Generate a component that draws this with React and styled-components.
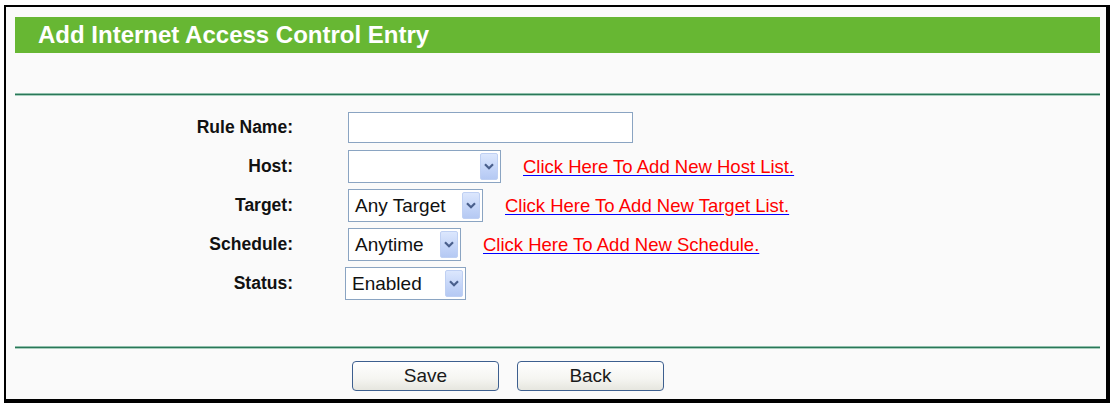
import React from "react";
import styled, { createGlobalStyle } from "styled-components";

const Global = createGlobalStyle`
  html, body { margin: 0; padding: 0; background: #ffffff; }
  body { font-family: "Liberation Sans", Arial, sans-serif; }
`;

const Frame = styled.div`
  margin: 5px 0 0 4px;
  width: 1106px;
  height: 398px;
  box-sizing: border-box;
  border-style: solid;
  border-color: #000;
  border-width: 2px 4px 4px 2px;
  background: #fafafa;
  padding: 10px 6px 0 9px;
  display: flex;
  flex-direction: column;
  overflow: hidden;
`;

const Header = styled.div`
  height: 36px;
  background: #67b733;
  color: #fff;
  font-weight: bold;
  font-size: 24px;
  display: flex;
  align-items: center;
  padding-left: 23px;
`;

const Divider = styled.div`
  height: 3px;
  margin-top: ${(p) => p.$top}px;
  background: linear-gradient(#a9cfbf 0, #8fbfab 0.5px, #2a7758 1px, #2a7758 2px, #a9cfbf 2.5px, #d9ebe3 3px);
`;

const Form = styled.div`
  margin-top: 12px;
  display: grid;
  grid-template-columns: 278px 1fr;
  column-gap: 55px;
  grid-auto-rows: 39px;
  align-items: center;
`;

const Label = styled.div`
  text-align: right;
  font-weight: bold;
  font-size: 17.5px;
  color: #111;
`;

const Field = styled.div`
  display: flex;
  align-items: center;
  gap: 22px;
  margin-left: ${(p) => p.$shift || 0}px;
`;

const TextInput = styled.div`
  width: 285px;
  height: 31px;
  box-sizing: border-box;
  border: 1px solid #8aa4c2;
  background: #fff;
`;

const SelectBox = styled.div`
  flex: none;
  width: ${(p) => p.$w}px;
  height: 33px;
  box-sizing: border-box;
  border: 1px solid #8aa4c2;
  background: #fff;
  display: flex;
  align-items: center;
  padding: 0 2px 0 6px;
  font-size: 19px;
  color: #111;
`;

const SelectValue = styled.span`
  flex: 1;
`;

const ArrowButton = styled.div`
  flex: none;
  width: 18px;
  height: 27px;
  box-sizing: border-box;
  border: 1px solid #bfd0f3;
  border-radius: 2px;
  background: linear-gradient(#dce7fd, #c3d4f8 60%, #b5c9f3);
  display: flex;
  align-items: center;
  justify-content: center;
`;

const Chevron = () => (
  <svg width="10" height="7" viewBox="0 0 10 7">
    <path d="M1 1.2 L5 5.2 L9 1.2" fill="none" stroke="#4a5f8c" strokeWidth="2.2" />
  </svg>
);

const Link = styled.a`
  font-size: 18.5px;
  color: #ff0000;
  text-decoration: underline;
  text-decoration-color: #0000ff;
  text-underline-offset: 2px;
  cursor: pointer;
  white-space: nowrap;
`;

const ButtonRow = styled.div`
  margin-top: 12px;
  padding-left: 337px;
  display: flex;
  gap: 18px;
`;

const Button = styled.div`
  width: 147px;
  height: 30px;
  box-sizing: border-box;
  border: 1px solid #3d5f8f;
  border-radius: 4px;
  background: linear-gradient(#ffffff, #f5f5f1 60%, #e6e6df);
  display: flex;
  align-items: center;
  justify-content: center;
  font-size: 19px;
  color: #1a1a1a;
`;

const Select = ({ w, value }) => (
  <SelectBox $w={w}>
    <SelectValue>{value}</SelectValue>
    <ArrowButton>
      <Chevron />
    </ArrowButton>
  </SelectBox>
);

export default function App() {
  return (
    <>
      <Global />
      <Frame>
        <Header>Add Internet Access Control Entry</Header>
        <Divider $top={40} />
        <Form>
          <Label>Rule Name:</Label>
          <Field>
            <TextInput />
          </Field>

          <Label>Host:</Label>
          <Field>
            <Select w={153} value="" />
            <Link>Click Here To Add New Host List.</Link>
          </Field>

          <Label>Target:</Label>
          <Field>
            <Select w={135} value="Any Target" />
            <Link>Click Here To Add New Target List.</Link>
          </Field>

          <Label>Schedule:</Label>
          <Field>
            <Select w={113} value="Anytime" />
            <Link>Click Here To Add New Schedule.</Link>
          </Field>

          <Label>Status:</Label>
          <Field $shift={-3}>
            <Select w={121} value="Enabled" />
          </Field>
        </Form>
        <Divider $top={43} />
        <ButtonRow>
          <Button>Save</Button>
          <Button>Back</Button>
        </ButtonRow>
      </Frame>
    </>
  );
}
